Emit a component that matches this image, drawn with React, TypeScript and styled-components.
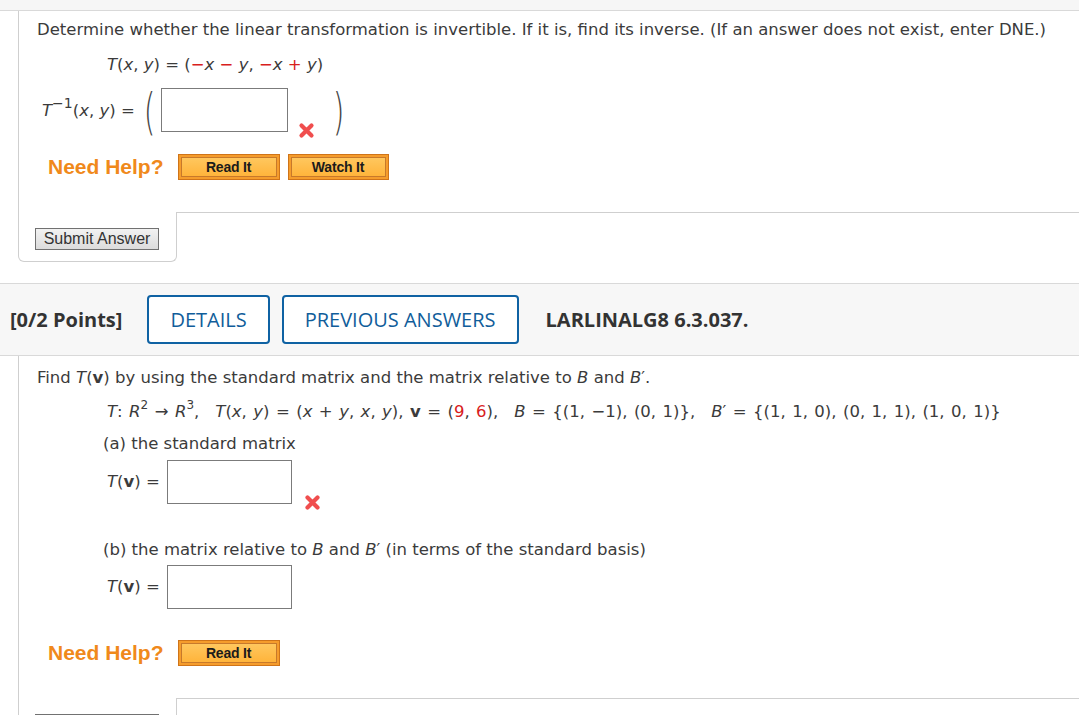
import React from "react";
import styled, { createGlobalStyle } from "styled-components";

const Global = createGlobalStyle`
  html, body { margin: 0; padding: 0; background: #ffffff; }
  body {
    font-family: "DejaVu Sans", Verdana, sans-serif;
    color: #3b3b3b;
    font-size: 16.5px;
  }
  * { box-sizing: border-box; }
`;

const TopStrip = styled.div`
  height: 11px;
  background: #f6f6f6;
  border-bottom: 1px solid #d9d9d9;
`;

const QuestionBody = styled.div<{ $top: number; $bottom: number }>`
  margin-left: 18px;
  border-left: 1px solid #cfcfcf;
  padding: ${(p) => p.$top}px 0 ${(p) => p.$bottom}px 18px;
`;

const TextLine = styled.div<{ $mt?: number; $indent?: number; $ws?: number }>`
  font-size: 16.5px;
  line-height: 20px;
  height: 20px;
  white-space: nowrap;
  margin-top: ${(p) => p.$mt ?? 0}px;
  padding-left: ${(p) => p.$indent ?? 0}px;
  word-spacing: ${(p) => p.$ws ?? 0}px;
`;

const I = styled.i`
  font-style: italic;
`;

const Bv = styled.b`
  font-weight: bold;
`;

const Red = styled.span`
  color: #d8201c;
`;

const Sup = styled.sup<{ $size?: number }>`
  font-size: ${(p) => p.$size ?? 12}px;
  line-height: 0;
  vertical-align: 8px;
`;

const Gap = styled.span`
  display: inline-block;
  width: 16px;
`;

const AnswerRow = styled.div<{ $mt: number; $indent: number }>`
  display: flex;
  align-items: flex-start;
  margin-top: ${(p) => p.$mt}px;
  padding-left: ${(p) => p.$indent}px;
  white-space: nowrap;
`;

const Label = styled.span<{ $mt: number; $mr: number }>`
  font-size: 16.5px;
  line-height: 20px;
  margin-top: ${(p) => p.$mt}px;
  margin-right: ${(p) => p.$mr}px;
`;

const Paren = styled.span`
  display: block;
  height: 47px;
  width: 12px;
  line-height: 47px;
  font-size: 30px;
  font-family: "DejaVu Sans", sans-serif;
  font-weight: 200;
  color: #454545;
  transform: scaleY(1.65);
  transform-origin: center;
  text-align: center;
`;

const AnswerBox = styled.input.attrs({ type: "text" })<{ $w: number }>`
  width: ${(p) => p.$w}px;
  height: 44px;
  border: 1px solid #7b7b7b;
  background: #fff;
  margin: 0;
  padding: 0;
  outline: none;
`;

const WrongMark = styled.svg<{ $ml: number; $mr: number; $mb: number }>`
  width: 17px;
  height: 17px;
  margin-top: 34px;
  margin-left: ${(p) => p.$ml}px;
  margin-right: ${(p) => p.$mr}px;
  margin-bottom: ${(p) => p.$mb}px;
  flex-shrink: 0;
`;

const HelpRow = styled.div<{ $mt: number }>`
  display: flex;
  align-items: center;
  height: 26px;
  margin-top: ${(p) => p.$mt}px;
  padding-left: 11px;
`;

const HelpText = styled.span`
  font-family: "Liberation Sans", Arial, sans-serif;
  font-weight: bold;
  font-size: 21px;
  color: #f0891b;
  margin-right: 14px;
`;

const HelpButton = styled.button`
  height: 26px;
  padding: 2px;
  margin: 0 8px 0 0;
  border: 1px solid #cf7419;
  background: #f59c2c;
  cursor: pointer;
  display: flex;
`;

const HelpButtonFace = styled.span<{ $w: number }>`
  display: flex;
  align-items: center;
  justify-content: center;
  width: ${(p) => p.$w}px;
  height: 20px;
  border: 1px solid #c7792b;
  background: linear-gradient(#ffc75e, #ffb43b);
  font-family: "Liberation Sans", Arial, sans-serif;
  font-weight: bold;
  font-size: 14px;
  color: #1b1b1b;
  letter-spacing: -0.2px;
`;

const Footer = styled.div`
  display: flex;
  margin-left: 18px;
`;

const SubmitCell = styled.div`
  width: 159px;
  height: 50px;
  border: 1px solid #cfcfcf;
  border-top: none;
  border-radius: 0 0 6px 6px;
  padding: 16px 0 0 16px;
`;

const FooterRest = styled.div`
  flex: 1;
  border-top: 1px solid #cfcfcf;
`;

const SubmitButton = styled.button`
  width: 124px;
  height: 22px;
  padding: 0;
  border: 1px solid #717171;
  background: linear-gradient(#f2f2f2, #dcdcdc);
  font-family: "Liberation Sans", Arial, sans-serif;
  font-size: 16px;
  color: #333;
  line-height: 20px;
`;

const Spacer = styled.div<{ $h: number }>`
  height: ${(p) => p.$h}px;
`;

const HeaderBand = styled.div`
  display: flex;
  align-items: center;
  height: 73px;
  padding-left: 10px;
  background: #f7f7f7;
  border-top: 1px solid #d9d9d9;
  border-bottom: 1px solid #d9d9d9;
  font-family: "Open Sans", sans-serif;
  font-size: 20px;
  color: #333;
`;

const Points = styled.span`
  font-weight: bold;
  margin-right: 25px;
`;

const OutlineButton = styled.button`
  height: 49px;
  padding: 0 21px;
  margin-right: 12px;
  border: 2px solid #0f62a3;
  border-radius: 4px;
  background: #ffffff;
  font-family: "Open Sans", sans-serif;
  font-size: 20px;
  font-weight: 500;
  color: #105d9a;
  cursor: pointer;
`;

const ProblemCode = styled.span`
  font-weight: bold;
  margin-left: 15px;
`;

const Cross = ({ ml, mr = 0, mb }: { ml: number; mr?: number; mb: number }) => (
  <WrongMark $ml={ml} $mr={mr} $mb={mb} viewBox="0 0 17 17">
    <path
      d="M3.5 3.5 L13.5 13.5 M13.5 3.5 L3.5 13.5"
      stroke="#f04e4e"
      strokeWidth="4.2"
      strokeLinecap="round"
      fill="none"
    />
  </WrongMark>
);

export default function App() {
  return (
    <>
      <Global />
      <TopStrip />
      <QuestionBody $top={9} $bottom={32}>
        <TextLine>
          Determine whether the linear transformation is invertible. If it is, find its inverse. (If an answer does not exist, enter DNE.)
        </TextLine>
        <TextLine $mt={15} $indent={70} $ws={0}>
          <I>T</I>(<I>x</I>, <I>y</I>) = (<Red>−</Red><I>x</I> <Red>−</Red> <I>y</I>, <Red>−</Red><I>x</I> <Red>+</Red> <I>y</I>)
        </TextLine>
        <AnswerRow $mt={13} $indent={5}>
          <Label $mt={13} $mr={9}>
            <I>T</I><Sup $size={14}>−1</Sup>(<I>x</I>, <I>y</I>) =
          </Label>
          <Paren>(</Paren>
          <AnswerBox $w={127} style={{ marginLeft: 5 }} />
          <Cross ml={10} mr={18} mb={-4} />
          <Paren>)</Paren>
        </AnswerRow>
        <HelpRow $mt={19}>
          <HelpText>Need Help?</HelpText>
          <HelpButton>
            <HelpButtonFace $w={96}>Read It</HelpButtonFace>
          </HelpButton>
          <HelpButton>
            <HelpButtonFace $w={95}>Watch It</HelpButtonFace>
          </HelpButton>
        </HelpRow>
      </QuestionBody>
      <Footer>
        <SubmitCell>
          <SubmitButton>Submit Answer</SubmitButton>
        </SubmitCell>
        <FooterRest />
      </Footer>
      <Spacer $h={21} />
      <HeaderBand>
        <Points>[0/2 Points]</Points>
        <OutlineButton>DETAILS</OutlineButton>
        <OutlineButton>PREVIOUS ANSWERS</OutlineButton>
        <ProblemCode>LARLINALG8 6.3.037.</ProblemCode>
      </HeaderBand>
      <QuestionBody $top={12} $bottom={32}>
        <TextLine>
          Find <I>T</I>(<Bv>v</Bv>) by using the standard matrix and the matrix relative to <I>B</I> and <I>B</I>′.
        </TextLine>
        <TextLine $mt={14} $indent={70} $ws={1.2}>
          <I>T</I>: <I>R</I><Sup>2</Sup> → <I>R</I><Sup>3</Sup>,<Gap /><I>T</I>(<I>x</I>, <I>y</I>) = (<I>x</I> + <I>y</I>, <I>x</I>, <I>y</I>), <Bv>v</Bv> = (<Red>9</Red>, <Red>6</Red>),<Gap /><I>B</I> = {"{"}(1, −1), (0, 1){"}"},<Gap /><I>B</I>′ = {"{"}(1, 1, 0), (0, 1, 1), (1, 0, 1){"}"}
        </TextLine>
        <TextLine $mt={12} $indent={66}>
          (a) the standard matrix
        </TextLine>
        <AnswerRow $mt={6} $indent={70}>
          <Label $mt={12} $mr={7}>
            <I>T</I>(<Bv>v</Bv>) =
          </Label>
          <AnswerBox $w={125} />
          <Cross ml={12} mb={-7} />
        </AnswerRow>
        <TextLine $mt={36} $indent={66}>
          (b) the matrix relative to <I>B</I> and <I>B</I>′ (in terms of the standard basis)
        </TextLine>
        <AnswerRow $mt={5} $indent={70}>
          <Label $mt={12} $mr={7}>
            <I>T</I>(<Bv>v</Bv>) =
          </Label>
          <AnswerBox $w={125} />
        </AnswerRow>
        <HelpRow $mt={31}>
          <HelpText>Need Help?</HelpText>
          <HelpButton>
            <HelpButtonFace $w={96}>Read It</HelpButtonFace>
          </HelpButton>
        </HelpRow>
      </QuestionBody>
      <Footer>
        <SubmitCell>
          <SubmitButton>Submit Answer</SubmitButton>
        </SubmitCell>
        <FooterRest />
      </Footer>
    </>
  );
}
